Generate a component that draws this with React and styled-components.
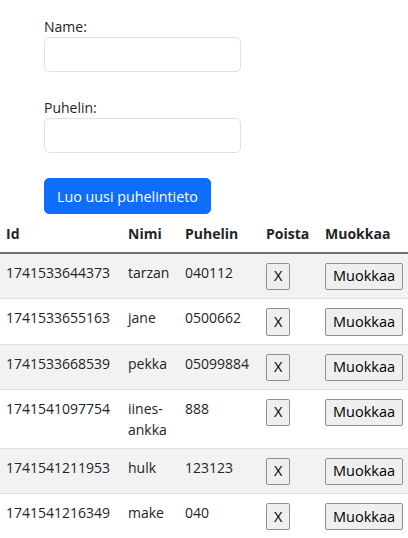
import React from 'react';
import styled, { createGlobalStyle } from 'styled-components';

const GlobalStyle = createGlobalStyle`
    html, body {
        margin: 0;
        padding: 0;
        background: #fff;
        overflow-x: hidden;
    }
    body {
        font-family: "Open Sans", "Noto Sans", sans-serif;
        font-size: 14px;
        line-height: 1.5;
        color: #212529;
    }
`;

const persons = [
    { id: '1741533644373', name: 'tarzan', number: '040112' },
    { id: '1741533655163', name: 'jane', number: '0500662' },
    { id: '1741533668539', name: 'pekka', number: '05099884' },
    { id: '1741541097754', name: 'iines-ankka', number: '888' },
    { id: '1741541211953', name: 'hulk', number: '123123' },
    { id: '1741541216349', name: 'make', number: '040' },
];

const columns = [
    { title: 'Id', width: 120 },
    { title: 'Nimi', width: 57 },
    { title: 'Puhelin', width: 81 },
    { title: 'Poista', width: 59 },
    { title: 'Muokkaa', width: 91 },
];

const App = () => (
    <Root>
        <GlobalStyle />
        <Form onSubmit={e => e.preventDefault()}>
            <Group>
                <Label htmlFor="name">Name:</Label>
                <Input id="name" />
            </Group>
            <Group>
                <Label htmlFor="number">Puhelin:</Label>
                <Input id="number" />
            </Group>
            <SubmitButton type="submit">Luo uusi puhelintieto</SubmitButton>
        </Form>
        <Table>
            <colgroup>
                {columns.map(c => (
                    <Col key={c.title} $width={c.width} />
                ))}
            </colgroup>
            <thead>
                <tr>
                    {columns.map(c => (
                        <Th key={c.title}>{c.title}</Th>
                    ))}
                </tr>
            </thead>
            <tbody>
                {persons.map(p => (
                    <Row key={p.id}>
                        <Td>{p.id}</Td>
                        <Td>{p.name}</Td>
                        <Td>{p.number}</Td>
                        <Td><PlainButton>X</PlainButton></Td>
                        <Td><PlainButton>Muokkaa</PlainButton></Td>
                    </Row>
                ))}
            </tbody>
        </Table>
    </Root>
);

const Root = styled.div`
    padding-top: 16px;
`;

const Form = styled.form`
    display: flex;
    flex-direction: column;
    align-items: flex-start;
    padding-left: 44px;
`;

const Group = styled.div`
    display: flex;
    flex-direction: column;
    margin-bottom: 25px;
`;

const Label = styled.label`
    display: block;
    line-height: 21px;
`;

const Input = styled.input`
    box-sizing: border-box;
    width: 197px;
    height: 35px;
    padding: 6px 12px;
    border: 1px solid #dee2e6;
    border-radius: 5px;
    font: inherit;
    color: #212529;
    background: #fff;
    outline: none;
`;

const SubmitButton = styled.button`
    box-sizing: border-box;
    height: 36px;
    padding: 0 12px;
    border: 1px solid #0d6efd;
    border-radius: 5px;
    background: #0d6efd;
    color: #fff;
    font-family: inherit;
    font-size: 14.3px;
    cursor: pointer;
`;

const Table = styled.table`
    width: 100%;
    table-layout: fixed;
    border-collapse: collapse;
    margin-top: 1px;
`;

const Col = styled.col`
    width: ${p => p.$width}px;
`;

const Th = styled.th`
    padding: 8px;
    text-align: left;
    font-weight: 700;
    vertical-align: bottom;
    line-height: 21px;
    border-bottom: 2px solid #6b6e72;

    &:first-child {
        padding-left: 6px;
    }
`;

const Row = styled.tr`
    border-bottom: 1px solid #dee2e6;

    &:nth-child(odd) {
        background: #f2f2f2;
    }
`;

const Td = styled.td`
    padding: 8px;
    vertical-align: top;
    line-height: 21px;

    &:first-child {
        padding-left: 6px;
    }
    &:last-child {
        padding-right: 6px;
    }
`;

const PlainButton = styled.button`
    display: block;
    box-sizing: border-box;
    height: 27.3px;
    margin-top: 1px;
    padding: 0 7px;
    border: 1px solid #8f8f8f;
    border-radius: 2px;
    background: #efefef;
    color: #000;
    font-family: inherit;
    font-size: 14.5px;
    line-height: 1;
    cursor: pointer;
`;

export default App;
